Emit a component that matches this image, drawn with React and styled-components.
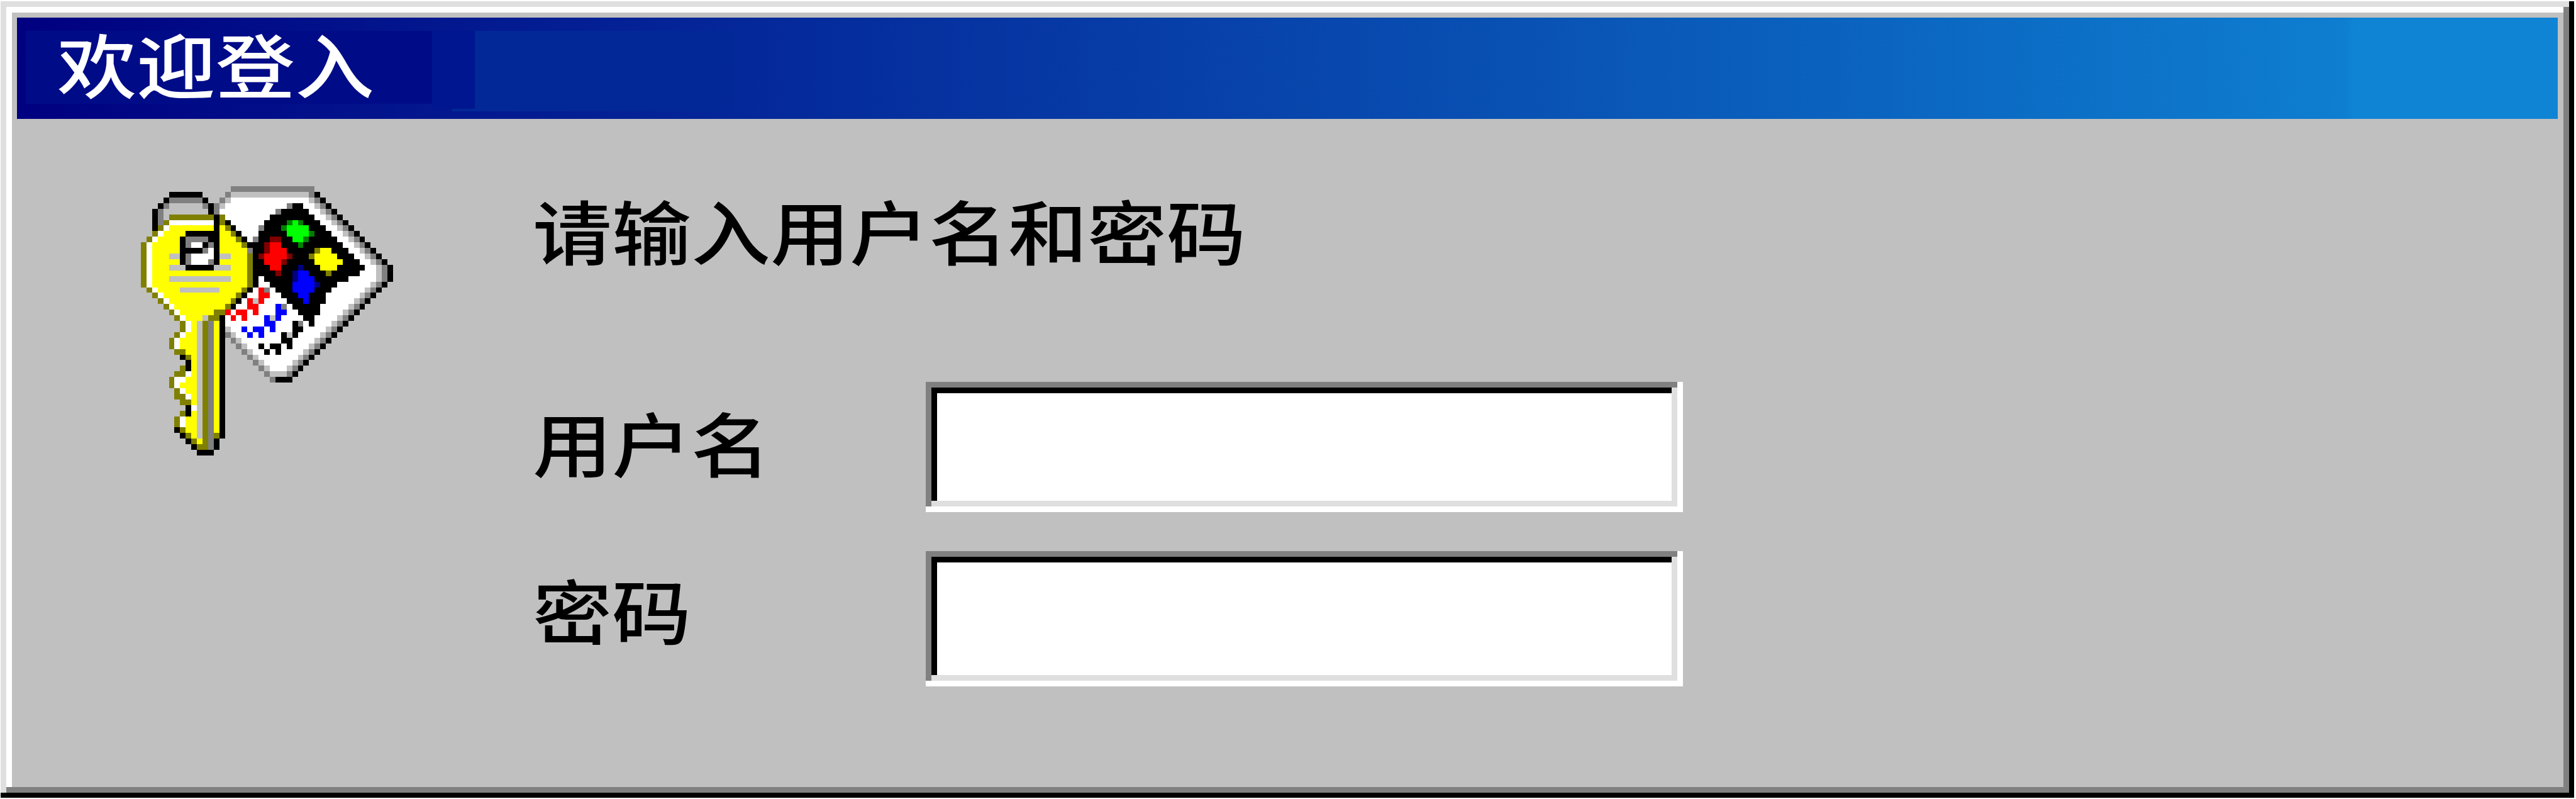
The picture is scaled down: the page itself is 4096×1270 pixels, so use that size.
import React from "react";
import styled, { createGlobalStyle } from "styled-components";

const GlobalStyle = createGlobalStyle`
  html, body { margin: 0; padding: 0; background: #ffffff; }
  * { box-sizing: border-box; }
`;

const Screen = styled.div`
  width: 4096px;
  height: 1270px;
  padding: 2px 3px 2px 1px;
  overflow: hidden;
  background: #ffffff;
  font-family: "Noto Sans CJK SC", "Noto Sans", sans-serif;
`;

const Dialog = styled.section`
  display: flex;
  flex-direction: column;
  width: 100%;
  height: 100%;
  padding: 26px;
  background: #c0c0c0;
  box-shadow:
    inset -8px -8px #000000,
    inset 9px 9px #dfdfdf,
    inset -17px -17px #808080,
    inset 18px 18px #ffffff;
`;

const TitleBar = styled.header`
  flex: none;
  display: flex;
  align-items: flex-start;
  height: 161px;
  padding: 21px 0 0 14px;
  background: linear-gradient(90deg, #000080 0%, #0e7ed0 91.6%, #1084d4 92%);
`;

const Text = styled.span`
  display: block;
  color: ${(p) => p.$color || "#000000"};
  font-size: 126px;
  font-weight: 500;
  line-height: 126px;
  white-space: nowrap;
  transform: scaleY(0.885);
`;

const Caption = styled.h1`
  display: flow-root;
  width: 646px;
  height: 116px;
  margin: 0;
  padding-left: 50px;
  background: #000c87;

  ${Text} {
    margin-top: -13px;
  }
`;

const CaptionShade = styled.div`
  position: relative;
  width: ${(p) => p.$width}px;
  height: ${(p) => p.$height}px;
  background: ${(p) => p.$color};
`;

const ShadeFoot = styled.span`
  position: absolute;
  left: -36px;
  bottom: 0;
  width: 36px;
  height: 4px;
  background: #022898;
`;

const Body = styled.main`
  flex: 1;
  display: flex;
  align-items: flex-start;
  padding: 107px 0 0 197px;
`;

const KeyIcon = styled.svg`
  flex: none;
  width: 401px;
  height: 428px;
  margin-right: 222px;
`;

const Form = styled.form`
  display: flex;
  flex-direction: column;
  align-items: flex-start;
  padding-top: 5px;
`;

const Fields = styled.div`
  display: flex;
  flex-direction: column;
  gap: 62px;
  padding-top: 180px;
`;

const Field = styled.label`
  display: grid;
  grid-template-columns: 625px 1204px;
  align-items: start;
`;

const FieldName = styled(Text)`
  margin-top: ${(p) => p.$drop}px;
`;

const Input = styled.input`
  width: 1204px;
  height: ${(p) => p.$height}px;
  margin: 0;
  padding: 18px 28px;
  border: 0;
  border-radius: 0;
  outline: 0;
  background: #ffffff;
  font: inherit;
  font-size: 126px;
  box-shadow:
    inset -9px -9px #ffffff,
    inset 9px 9px #808080,
    inset -18px -18px #dfdfdf,
    inset 18px 18px #000000;
`;

const PALETTE = {
  K: "#000000",
  G: "#808080",
  S: "#c0c0c0",
  W: "#ffffff",
  O: "#808000",
  Y: "#ffff00",
  R: "#ff0000",
  M: "#800000",
  B: "#0000ff",
  N: "#000080",
  L: "#00ff00",
  E: "#008000",
};

// Each row lists runs as <first column><colour><length>.
const ICON_ROWS = [
  "16G15",
  "5K6 15G1 16S14 30G1 31K1",
  "4K1 5G6 11K1 14G1 15S1 16W14 30S1 31G1 32K1",
  "3K1 4G1 5S6 11G1 12K1 13G1 14S1 15W11 26G1 27K2 29W2 31S1 32G1 33K1",
  "2K1 3G1 4S8 12K1 13G1 14W10 24G1 25K5 30W2 32S1 33G1 34K1",
  "2K1 3G1 4S1 5O8 13K1 14O1 15W8 23K8 31W2 33S1 34G1 35K1",
  "2K1 3G1 4O1 5W8 13K1 14O1 15K1 16W6 22K4 26E1 27L1 28E1 29K3 32W2 34S1 35G1 36K1",
  "2K1 3O1 4W1 5Y8 13K1 14Y1 15O1 16K1 17W4 21G1 22K3 25E1 26L4 30K3 33W2 35S1 36G1 37K1",
  "2O1 3W1 4Y4 8K6 14Y2 16O1 17K1 18W3 21K5 26L4 30E1 31K3 34W2 36S1 37G1 38K1",
  "1O1 2W1 3Y4 7K1 8G4 12K2 14Y3 17O1 18K1 19W1 20G1 21K2 23M2 25K2 27L2 29E1 30K5 35W2 37S1 38G1 39K1",
  "0O1 1W1 2Y5 7K1 8G1 9W2 11K1 12G1 13K1 14Y4 18O1 19K3 22M1 23R2 25K3 28E1 29K7 36W2 38S1 39G1 40K1",
  "0O1 1W1 2Y5 7K4 11G1 12W1 13K1 14Y5 19G1 20K2 22M1 23R3 26K5 31O1 32Y2 34K3 37W2 39S1 40G1 41K1",
  "0O1 1W1 2Y3 5S2 7K1 8G1 9W4 13K1 14S2 16Y3 19O1 20K1 21M1 22R4 26M1 27K3 30O1 31Y4 35K3 38W2 40S1 41G1 42K1",
  "0O1 1W1 2Y5 7K1 8G1 9W3 12G1 13K1 14Y5 19O1 20K2 22R3 25M1 26K5 31Y5 36K3 39W2 41S1 42G1 43K1",
  "0O1 1W1 2Y3 5S3 8K5 13S3 16Y3 19O1 20K3 23R2 25K3 28N1 29K3 32Y3 35K5 40W2 42S1 43G1 44K1",
  "0O1 1W1 2Y17 19O1 20K4 24M1 25K2 27N1 28B2 30K3 33O1 34K5 39W3 42S1 43G1 44K1",
  "0O1 1W1 2Y3 5S11 16Y3 19O1 20K1 21W1 22K5 27N1 28B3 31K6 37W5 42S1 43G1 44K1",
  "0O1 1W1 2Y17 19O1 20K1 21W2 23K4 27B4 31N1 32K3 35W6 41S1 42G1 43K1",
  "1O1 2W1 3Y4 7S7 14Y4 18O1 19K1 20W1 21R1 22G1 23W1 24K3 27B4 31K3 34W6 40S1 41G1 42K1",
  "2O1 3W1 4Y13 17O1 18K1 19W2 21R2 23W2 25K3 28B2 30K3 33W6 39S1 40G1 41K1",
  "3O1 4W1 5Y11 16O1 17K1 18W1 19R1 20S1 21R1 22W4 26K3 29B1 30K3 33W5 38S1 39G1 40K1",
  "4O1 5W1 6Y9 15O1 16K1 17W2 19R2 21W3 24B1 25G1 26W1 27K5 32W5 37S1 38G1 39K1",
  "5O1 6W1 7Y6 13O2 15R1 16W1 17R2 19W1 20R1 21W3 24B2 26W2 28K4 32W4 36S1 37G1 38K1",
  "6O1 7W1 8Y3 11S1 12O2 14K1 15W1 16R1 17W1 18R1 19W3 22B1 23S1 24B1 25W4 29K2 31W4 35S1 36G1 37K1",
  "7O1 8W1 9Y1 10S1 11O1 12G1 13Y1 14K1 15W7 22B2 24W3 27K1 28G1 29W1 30K1 31W3 34S1 35G1 36K1",
  "7O1 8W1 9Y1 10S1 11O1 12G1 13Y1 14K1 15S1 16W2 18B1 19W1 20B2 22W1 23B1 24W3 27K2 29W4 33S1 34G1 35K1",
  "6O1 7W1 8Y2 10S1 11O1 12G1 13Y1 14K1 15G1 16S1 17W2 19B1 20W1 21B1 22W3 25K1 26S1 27K1 28W4 32S1 33G1 34K1",
  "5O1 6W1 7Y3 10S1 11O1 12G1 13Y1 14K1 16G1 17S1 18W7 25K2 27W4 31S1 32G1 33K1",
  "5O1 6W1 7Y3 10S1 11O1 12G1 13Y1 14K1 17G1 18S1 19W2 21K1 22W1 23K2 25W1 26K1 27W3 30S1 31G1 32K1",
  "6O2 8Y2 10S1 11O1 12G1 13Y1 14K1 18G1 19S1 20W2 22K1 23W1 24K1 25W4 29S1 30G1 31K1",
  "7K1 8O1 9Y1 10S1 11O1 12G1 13Y1 14K1 19G1 20S1 21W7 28S1 29G1 30K1",
  "8K1 9Y1 10S1 11O1 12G1 13Y1 14K1 20G1 21S1 22W5 27S1 28G1 29K1",
  "7O1 8K1 9Y1 10S1 11O1 12G1 13Y1 14K1 21G1 22S1 23W3 26S1 27G1 28K1",
  "6O2 8W1 9Y1 10S1 11O1 12G1 13Y1 14K1 22G1 23S3 26G1 27K1",
  "5O1 6W2 8Y2 10S1 11O1 12G1 13Y1 14K1 23G1 24K3",
  "5O1 6W1 7Y3 10S1 11O1 12G1 13Y1 14K1",
  "6O1 7W1 8Y2 10S1 11O1 12G1 13Y1 14K1",
  "6O2 8W1 9Y1 10S1 11O1 12G1 13Y1 14K1",
  "7O2 9Y1 10S1 11O1 12G1 13Y1 14K1",
  "8K1 9W1 10S1 11O1 12G1 13Y1 14K1",
  "7O1 8K1 9Y1 10S1 11O1 12G1 13Y1 14K1",
  "6O1 7W1 8Y2 10S1 11O1 12G1 13Y1 14K1",
  "6O1 7W1 8Y2 10S1 11O1 12G1 13Y1 14K1",
  "6K1 7O1 8Y2 10S1 11O1 12G1 13Y1 14K1",
  "7K1 8O1 9Y1 10S1 11O1 12G1 13O1 14K1",
  "8K1 9O1 10Y1 11O1 12G1 13K1",
  "9K1 10O2 12G1 13K1",
  "10K3",
];

function LoginIcon() {
  return (
    <KeyIcon viewBox="0 0 45 48" preserveAspectRatio="none" shapeRendering="crispEdges" aria-hidden="true">
      {ICON_ROWS.flatMap((row, y) =>
        row.split(" ").map((run) => {
          const [, x, color, length] = run.match(/^(\d+)([A-Z])(\d+)$/);
          return <rect key={`${y}-${x}`} x={x} y={y} width={length} height="1" fill={PALETTE[color]} />;
        })
      )}
    </KeyIcon>
  );
}

export default function App() {
  return (
    <Screen>
      <GlobalStyle />
      <Dialog>
        <TitleBar>
          <Caption>
            <Text $color="#ffffff">欢迎登入</Text>
          </Caption>
          <CaptionShade $width={68} $height={124} $color="#001690" />
          <CaptionShade $width={411} $height={128} $color="#022898">
            <ShadeFoot />
          </CaptionShade>
        </TitleBar>
        <Body>
          <LoginIcon />
          <Form>
            <Text>请输入用户名和密码</Text>
            <Fields>
              <Field>
                <FieldName $drop={31}>用户名</FieldName>
                <Input type="text" $height={207} />
              </Field>
              <Field>
                <FieldName $drop={28}>密码</FieldName>
                <Input type="password" $height={215} />
              </Field>
            </Fields>
          </Form>
        </Body>
      </Dialog>
    </Screen>
  );
}
